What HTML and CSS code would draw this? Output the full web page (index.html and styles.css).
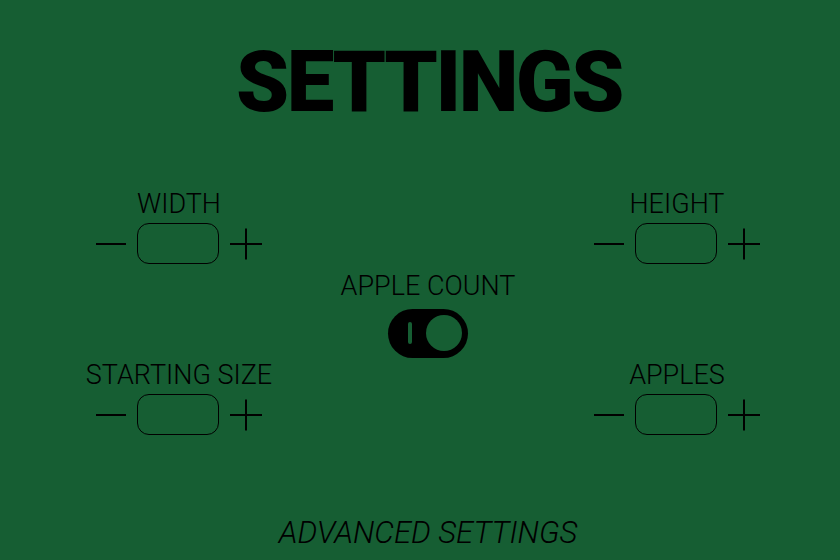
FILE: index.html
```html
<!DOCTYPE html>
<html>
<head>
<meta charset="utf-8">
<link rel="stylesheet" href="styles.css">
</head>
<body>
<div class="page">
  <h1 class="title">SETTINGS</h1>
  <div class="grid">
    <div class="control c-width">
      <div class="label">WIDTH</div>
      <div class="stepper">
        <svg class="minus" width="30" height="32" viewBox="0 0 30 32"><line x1="0" y1="16" x2="30" y2="16"/></svg>
        <div class="box"></div>
        <svg class="plus" width="32" height="32" viewBox="0 0 32 32"><line x1="0" y1="16" x2="32" y2="16"/><line x1="16" y1="0.5" x2="16" y2="31.5"/></svg>
      </div>
    </div>
    <div class="center">
      <div class="label">APPLE COUNT</div>
      <div class="toggle"><span class="bar"></span><span class="knob"></span></div>
    </div>
    <div class="control c-height">
      <div class="label">HEIGHT</div>
      <div class="stepper">
        <svg class="minus" width="30" height="32" viewBox="0 0 30 32"><line x1="0" y1="16" x2="30" y2="16"/></svg>
        <div class="box"></div>
        <svg class="plus" width="32" height="32" viewBox="0 0 32 32"><line x1="0" y1="16" x2="32" y2="16"/><line x1="16" y1="0.5" x2="16" y2="31.5"/></svg>
      </div>
    </div>
    <div class="control c-start">
      <div class="label">STARTING SIZE</div>
      <div class="stepper">
        <svg class="minus" width="30" height="32" viewBox="0 0 30 32"><line x1="0" y1="16" x2="30" y2="16"/></svg>
        <div class="box"></div>
        <svg class="plus" width="32" height="32" viewBox="0 0 32 32"><line x1="0" y1="16" x2="32" y2="16"/><line x1="16" y1="0.5" x2="16" y2="31.5"/></svg>
      </div>
    </div>
    <div class="control c-apples">
      <div class="label">APPLES</div>
      <div class="stepper">
        <svg class="minus" width="30" height="32" viewBox="0 0 30 32"><line x1="0" y1="16" x2="30" y2="16"/></svg>
        <div class="box"></div>
        <svg class="plus" width="32" height="32" viewBox="0 0 32 32"><line x1="0" y1="16" x2="32" y2="16"/><line x1="16" y1="0.5" x2="16" y2="31.5"/></svg>
      </div>
    </div>
  </div>
  <div class="advanced">ADVANCED SETTINGS</div>
</div>
</body>
</html>
```
FILE: styles.css
```css
html, body {
  margin: 0;
  padding: 0;
}
body {
  background: #165e33;
  color: #000;
  font-family: "Roboto", "Liberation Sans", sans-serif;
  width: 840px;
  height: 560px;
  overflow: hidden;
}
.page {
  display: flex;
  flex-direction: column;
  align-items: center;
  width: 840px;
  height: 560px;
  padding-left: 8px;
}
.title {
  margin: 33px 0 0 0;
  font-size: 85px;
  font-weight: 900;
  line-height: 98px;
  letter-spacing: -2.5px;
  padding-left: 2px;
}
.grid {
  align-self: stretch;
  margin: 58px 87px 0 87px;
  display: grid;
  grid-template-columns: 168px 1fr 168px;
  grid-template-rows: auto auto;
  row-gap: 96px;
}
.control {
  display: flex;
  flex-direction: column;
  align-items: center;
}
.c-width { grid-column: 1; grid-row: 1; }
.c-height { grid-column: 3; grid-row: 1; }
.c-start { grid-column: 1; grid-row: 2; }
.c-apples { grid-column: 3; grid-row: 2; }
.label {
  font-size: 27px;
  font-weight: 300;
  line-height: 30px;
  white-space: nowrap;
}
.stepper {
  display: flex;
  align-items: center;
  gap: 11px;
  margin-top: 4px;
}
.stepper svg line {
  stroke: #000;
  stroke-width: 2;
}
.box {
  width: 80px;
  height: 39px;
  border: 1.5px solid #000;
  border-radius: 12px;
}
.center {
  grid-column: 2;
  grid-row: 1 / 3;
  align-self: center;
  padding-top: 4px;
  display: flex;
  flex-direction: column;
  align-items: center;
}
.toggle {
  margin-top: 8px;
  width: 80px;
  height: 49px;
  border-radius: 25px;
  background: #000;
  display: flex;
  align-items: center;
}
.bar {
  width: 3.5px;
  height: 22px;
  border-radius: 2px;
  background: #165e33;
  margin-left: 20px;
}
.knob {
  width: 36px;
  height: 36px;
  border-radius: 50%;
  background: #165e33;
  margin-left: 14px;
}
.advanced {
  margin-top: auto;
  margin-bottom: 10px;
  font-size: 31px;
  font-weight: 300;
  font-style: italic;
  line-height: 34px;
}
```
